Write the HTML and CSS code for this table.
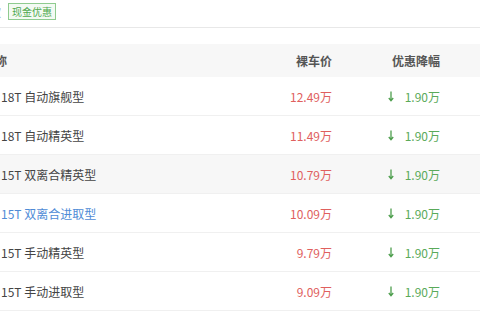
FILE: index.html
```html
<!DOCTYPE html>
<html lang="zh">
<head>
<meta charset="utf-8">
<link rel="stylesheet" href="styles.css">
</head>
<body>
<div class="top">
  <span class="cut">款</span>
  <span class="badge">现金优惠</span>
</div>
<div class="table">
  <div class="row head">
    <div class="name"><span class="head-label">名称</span></div>
    <div class="price">裸车价</div>
    <div class="off">优惠降幅</div>
  </div>
  <div class="row">
    <div class="name">18T 自动旗舰型</div>
    <div class="price red">12.49万</div>
    <div class="off green"><svg class="arrow" width="6" height="11" viewBox="0 0 6 11"><path d="M3 0.5V9.5M0.8 7L3 9.8L5.2 7" fill="none" stroke="#4d9e4d" stroke-width="1.3"/></svg>1.90万</div>
  </div>
  <div class="row">
    <div class="name">18T 自动精英型</div>
    <div class="price red">11.49万</div>
    <div class="off green"><svg class="arrow" width="6" height="11" viewBox="0 0 6 11"><path d="M3 0.5V9.5M0.8 7L3 9.8L5.2 7" fill="none" stroke="#4d9e4d" stroke-width="1.3"/></svg>1.90万</div>
  </div>
  <div class="row hover">
    <div class="name">15T 双离合精英型</div>
    <div class="price red">10.79万</div>
    <div class="off green"><svg class="arrow" width="6" height="11" viewBox="0 0 6 11"><path d="M3 0.5V9.5M0.8 7L3 9.8L5.2 7" fill="none" stroke="#4d9e4d" stroke-width="1.3"/></svg>1.90万</div>
  </div>
  <div class="row">
    <div class="name link">15T 双离合进取型</div>
    <div class="price red">10.09万</div>
    <div class="off green"><svg class="arrow" width="6" height="11" viewBox="0 0 6 11"><path d="M3 0.5V9.5M0.8 7L3 9.8L5.2 7" fill="none" stroke="#4d9e4d" stroke-width="1.3"/></svg>1.90万</div>
  </div>
  <div class="row">
    <div class="name">15T 手动精英型</div>
    <div class="price red">9.79万</div>
    <div class="off green"><svg class="arrow" width="6" height="11" viewBox="0 0 6 11"><path d="M3 0.5V9.5M0.8 7L3 9.8L5.2 7" fill="none" stroke="#4d9e4d" stroke-width="1.3"/></svg>1.90万</div>
  </div>
  <div class="row">
    <div class="name">15T 手动进取型</div>
    <div class="price red">9.09万</div>
    <div class="off green"><svg class="arrow" width="6" height="11" viewBox="0 0 6 11"><path d="M3 0.5V9.5M0.8 7L3 9.8L5.2 7" fill="none" stroke="#4d9e4d" stroke-width="1.3"/></svg>1.90万</div>
  </div>
</div>
</body>
</html>
```

FILE: styles.css
```css
html, body {
  margin: 0;
  padding: 0;
  background: #fff;
  overflow: hidden;
}
body {
  width: 480px;
  height: 320px;
  font-family: "Noto Sans CJK SC", "Noto Sans", sans-serif;
  color: #333;
}
.top {
  height: 24px;
  padding-top: 3px;
  border-bottom: 1px solid #e8e8e8;
  display: flex;
  align-items: flex-start;
}
.cut {
  font-size: 12px;
  line-height: 17px;
  color: #888;
  margin-left: -11px;
  margin-right: 7px;
}
.badge {
  display: inline-block;
  height: 15px;
  line-height: 15px;
  padding: 0 3px;
  font-size: 10px;
  color: #4fa84f;
  background: #f3faf3;
  border: 1px solid #8fcb8f;
}
.table {
  margin-top: 16px;
}
.row {
  display: grid;
  grid-template-columns: 1fr 80px 108px;
  padding-right: 40px;
  align-items: center;
  height: 38px;
  border-bottom: 1px solid #f0f0f0;
  font-size: 12px;
}
.row.head {
  height: 33px;
  background: #f7f7f7;
  border-bottom: none;
  color: #555;
  font-weight: bold;
}
.row.hover {
  background: #f7f7f7;
}
.head-label {
  display: inline-block;
  margin-left: -17px;
}
.name {
  white-space: nowrap;
  overflow: hidden;
  color: #444;
  padding-left: 1px;
}
.head .name {
  color: #555;
  overflow: visible;
  padding-left: 0;
}
.name.link {
  color: #4f8bd6;
}
.price, .off {
  text-align: right;
}
.red {
  color: #e0605e;
}
.green {
  color: #5aaa5a;
  display: flex;
  justify-content: flex-end;
  align-items: center;
}
.arrow {
  margin-right: 11px;
}
```
